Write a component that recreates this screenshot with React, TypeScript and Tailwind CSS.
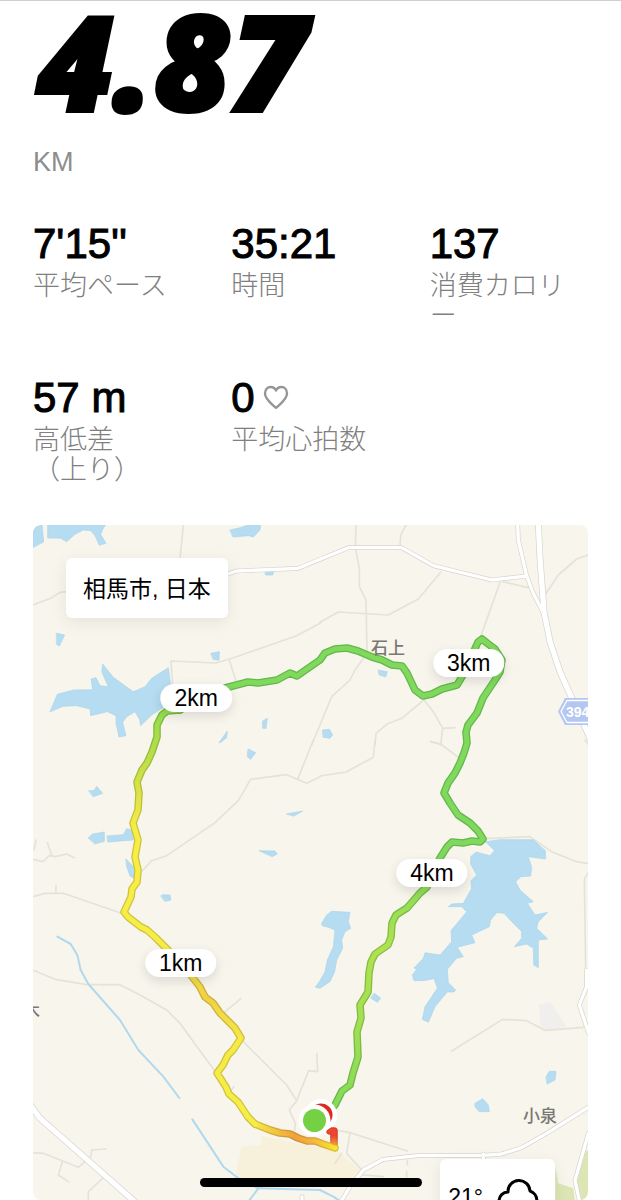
type Tile = {
  x: number;
  y: number;
  land?: { d: string; fill: string }[];
  water?: string[];
  streams?: string[];
  minor?: string[];
  major?: string[];
  highway?: string[];
};

// Map geometry, split into tiles. Tile units are a third of a map unit.
const tiles: Tile[] = [
  {
    x: 20,
    y: 515,
    water: [
      "M38 97V45L48 35L66 30L71 80Z",
      "M83 68V28H258L250 40L242 58L258 85L238 91L225 62L212 47L190 45L165 58L140 80L122 70Z",
      "M630 45L660 38L690 28H722L720 45L700 66L685 62L640 66Z",
      "M735 175L740 168H762L758 180H738Z",
      "M110 355L134 360L118 393L110 388Z",
      "M573 415L598 410L597 436L580 433Z",
      "M728 618L742 610L738 640L729 640Z",
      "M597 683L622 648L620 668L605 680Z",
      "M90 590L112 538L160 525L218 524L213 492L228 488L240 512L265 515L245 470L248 447L280 487L340 530L375 515L395 490L445 458L452 510L432 550L430 577L395 600L362 632L358 612L345 590L320 605L308 622L318 662L297 666L288 625V602L262 590L212 602L210 582L170 572L130 574Z",
    ],
    minor: [
      "M38 270L92 250L120 232L145 230",
      "M490 30L480 130",
      "M458 510L453 438L587 444L630 432L830 362L900 325",
      "M627 432L648 498",
      "M900 630L875 690",
    ],
    major: ["M620 178L650 168L835 160L900 133"],
  },
  {
    x: 320,
    y: 515,
    water: ["M175 465L202 470L197 486L178 480Z", "M8 645L28 643L38 660L30 670L10 667Z"],
    minor: [
      "M108 30L106 98L118 160V215L138 255L141 410",
      "M258 30L242 60L240 95",
      "M0 322L55 291L205 300L295 252L362 172",
      "M540 202L482 365",
      "M548 200L625 218",
      "M805 120L770 132L715 180L675 240",
      "M130 430L105 465L90 495L35 545L0 630",
      "M308 558L245 610L200 628L168 655L165 690",
      "M308 550L340 590L368 640L362 690",
      "M368 640L405 638",
      "M332 680L362 688",
    ],
    major: ["M0 133L85 98H245L340 152L515 195L620 183", "M593 25L595 75L620 183L640 235L668 290"],
    highway: ["M655 25L660 130L672 290L690 380L720 470L760 560L815 680"],
  },
  {
    x: 20,
    y: 740,
    water: [
      "M207 152L222 152L230 139L248 160L220 170Z",
      "M685 27L707 38L692 58L682 50Z",
      "M800 222L848 213L822 228Z",
      "M718 332L765 333L772 342L757 350Z",
      "M205 293L218 282L253 276V304L225 312Z",
      "M262 288L310 284L320 266L335 270L340 300L264 306Z",
      "M318 357L340 380L342 415L330 408L320 380Z",
      "M423 467L430 464L450 465L453 480L435 484Z",
    ],
    streams: ["M112 590L152 612L172 645L182 690"],
    minor: [
      "M360 400L395 362L440 347L585 248L655 182L692 118L800 104L860 130L900 110",
      "M833 118L880 0",
      "M38 470L75 460H130L300 518",
      "M108 460V437",
      "M38 358L68 365L88 347L105 350L140 342L163 353",
      "M48 300L42 330",
      "M82 308L95 345",
    ],
  },
  {
    x: 320,
    y: 740,
    water: [
      "M497 305L540 299H640L676 332L677 357L625 350L635 382L632 408L603 410L587 425L600 450L640 485L622 490L645 525L683 517L655 545L650 565L683 597L655 600V683L641 675L640 625L620 612L583 620L605 595V575L580 550L552 520L530 518L512 540L508 560L455 585L465 608L412 622L430 650L410 655L382 688L385 728L407 750L402 756L382 756L345 800L325 847L307 838L315 800L352 745L342 716L310 722L282 722L277 705L290 688L282 684L310 655L315 638L360 645L395 605L393 572L440 515L425 500H385L395 492L430 490L455 445L453 422L470 405L452 372V350L468 336L510 347L523 332Z",
      "M5 550L20 525L35 514L90 517L85 545L92 565L75 575L65 600L68 625L50 660L44 695L30 725L0 745L-14 742L0 722L15 695L22 660L40 620L45 570L25 562L8 558Z",
    ],
    minor: [
      "M0 108L78 96L160 52L165 0",
      "M332 5L362 12L415 52",
      "M495 296L630 290L695 335L770 365L805 371",
      "M805 397L793 418L797 690",
      "M795 0L806 15",
    ],
  },
  {
    x: 20,
    y: 970,
    land: [{ d: "M665 530L722 526L725 498L905 535V632H655L648 610Z", fill: "#f7f0da" }],
    streams: [
      "M182 0L205 42L300 150L355 240L430 320L478 384",
      "M517 448L610 590L655 625L715 655L900 660",
      "M715 655L685 695",
    ],
    minor: [
      "M38 0L105 28L200 44H300L360 75L440 120L480 160L560 270L590 310",
      "M612 128L662 86",
      "M670 215L730 275L800 345L830 392",
      "M890 250L893 305L866 302L830 392L808 420L826 460L824 480",
      "M632 362L642 350",
      "M38 548L70 550L175 592L212 560L215 540L258 537",
      "M127 575L115 615L145 635",
      "M248 625L205 665V695",
    ],
    major: ["M846 700V680"],
    highway: ["M20 390L60 445L350 700"],
  },
  {
    x: 320,
    y: 970,
    land: [
      { d: "M-5 515L55 545L130 610L95 655L-5 632Z", fill: "#f7f0da" },
      { d: "M657 105L690 95L740 170L678 180L660 165Z", fill: "#f0efed" },
      { d: "M806 540L790 545L765 632L775 695H806Z", fill: "#dce6b4" },
      { d: "M706 590L715 640L760 655L765 695H706Z", fill: "#dce6b4" },
    ],
    water: [
      "M163 70L182 85L172 97L153 85Z",
      "M678 320L688 304H708L705 330L682 342Z",
      "M465 400L488 386L505 405L508 425H478L466 412Z",
    ],
    streams: ["M0 660L40 680L70 700"],
    minor: [
      "M395 243L548 148L620 152L675 181L790 172",
      "M48 480L90 488L262 543",
      "M90 488L80 550L130 605",
      "M65 550L45 580",
      "M262 570V585",
      "M260 605V620",
      "M130 615L190 620",
    ],
    major: [
      "M60 700L90 650L130 600L190 568L300 556H490L545 552L605 533L680 490L810 409",
      "M490 552V575",
      "M805 490L765 632L780 700",
      "M800 0V50L778 105L806 190",
    ],
  },
];

const place = (t: Tile) => `translate(${t.x} ${t.y}) scale(${1 / 3})`;

const route = [
  {
    d: "M330 1131L334 1131L334 1146",
    outer: "url(#finish-edge)",
    inner: "url(#finish-core)",
  },
  {
    d: "M335 1148L323 1144L315 1141L307 1141L298 1138L290 1134L280 1133L270 1130L255 1124",
    outer: "url(#south-edge)",
    inner: "url(#south-core)",
  },
  {
    d: "M255 1124L248 1117L238 1102L229 1094L226 1087L217 1073L223 1065L228 1055L233 1050L241 1038L235 1028L227 1020L220 1013L213 1003L205 997L200 987L193 978L181 963L165 947L155 937L147 930L141 927L128 917L124 912L131 897L132 889L137 882L138 870L135 857L138 840L133 823L138 810L139 793L137 782L142 770L147 763L152 752L157 737L157 725L162 715L167 711L180 710",
    outer: "url(#west-edge)",
    inner: "url(#west-core)",
  },
  {
    d: "M180 710L210 694L225 688L248 682L258 683L277 680L290 673L297 676L307 669L320 660L325 653L335 649L347 648L358 651L372 657L382 660L392 665L402 666L407 673L415 690L423 696L432 694L442 689L457 685L463 675L478 642L482 639L487 643L495 649L502 660L500 672L495 680L483 698L477 713L468 725L466 732L467 743L464 753L460 763L455 773L448 783L444 793L450 803L458 815L470 823L478 831L483 839L480 842L472 841L463 843L452 842L447 847L440 858L427 887L420 893L407 908L396 915L392 923L391 937L388 945L375 954L371 962L369 973L368 992L360 1005L361 1018L357 1032L358 1057L353 1073L350 1085L342 1091L335 1105L326 1115",
    outer: "url(#east-edge)",
    inner: "url(#east-core)",
  },
];

function RouteColours() {
  return (
    <defs>
      <linearGradient id="finish-edge" gradientUnits="userSpaceOnUse" x1="0" y1="1128" x2="0" y2="1148">
        <stop offset="0.4" stopColor="#d6402c" />
        <stop offset="1" stopColor="#d8a32e" />
      </linearGradient>
      <linearGradient id="finish-core" gradientUnits="userSpaceOnUse" x1="0" y1="1128" x2="0" y2="1148">
        <stop offset="0.4" stopColor="#ec4630" />
        <stop offset="1" stopColor="#f7bd35" />
      </linearGradient>
      <linearGradient id="south-edge" gradientUnits="userSpaceOnUse" x1="255" y1="0" x2="335" y2="0">
        <stop offset="0" stopColor="#d2c53c" />
        <stop offset="0.5" stopColor="#d08b35" />
        <stop offset="0.7" stopColor="#d39a36" />
        <stop offset="1" stopColor="#d6c137" />
      </linearGradient>
      <linearGradient id="south-core" gradientUnits="userSpaceOnUse" x1="255" y1="0" x2="335" y2="0">
        <stop offset="0" stopColor="#f6ea43" />
        <stop offset="0.5" stopColor="#f0a13b" />
        <stop offset="0.7" stopColor="#f4b43c" />
        <stop offset="1" stopColor="#f9e32f" />
      </linearGradient>
      <linearGradient id="west-edge" gradientUnits="userSpaceOnUse" x1="0" y1="706" x2="0" y2="1124">
        <stop offset="0" stopColor="#6fb83e" />
        <stop offset="0.1" stopColor="#90bb3c" />
        <stop offset="0.2" stopColor="#b5bc3b" />
        <stop offset="0.3" stopColor="#cfc240" />
        <stop offset="0.6" stopColor="#cfc240" />
        <stop offset="0.7" stopColor="#ccab3c" />
        <stop offset="0.8" stopColor="#cfc240" />
        <stop offset="1" stopColor="#cfc240" />
      </linearGradient>
      <linearGradient id="west-core" gradientUnits="userSpaceOnUse" x1="0" y1="706" x2="0" y2="1124">
        <stop offset="0" stopColor="#8fdc52" />
        <stop offset="0.1" stopColor="#b2dd4a" />
        <stop offset="0.2" stopColor="#d9e344" />
        <stop offset="0.3" stopColor="#f6ee45" />
        <stop offset="0.6" stopColor="#f6ee45" />
        <stop offset="0.7" stopColor="#f0d144" />
        <stop offset="0.8" stopColor="#f6ea45" />
        <stop offset="1" stopColor="#f6ee45" />
      </linearGradient>
      <linearGradient id="east-edge" gradientUnits="userSpaceOnUse" x1="0" y1="860" x2="0" y2="1110">
        <stop offset="0" stopColor="#62b84b" />
        <stop offset="0.35" stopColor="#8ebb43" />
        <stop offset="0.65" stopColor="#83b945" />
        <stop offset="1" stopColor="#65b84a" />
      </linearGradient>
      <linearGradient id="east-core" gradientUnits="userSpaceOnUse" x1="0" y1="860" x2="0" y2="1110">
        <stop offset="0" stopColor="#80d95d" />
        <stop offset="0.35" stopColor="#aee34f" />
        <stop offset="0.65" stopColor="#a2e052" />
        <stop offset="1" stopColor="#84da5b" />
      </linearGradient>
    </defs>
  );
}

function MapDrawing() {
  return (
    <svg
      viewBox="33 525 555 675"
      className="block h-full w-full"
      fill="none"
      strokeLinecap="round"
      strokeLinejoin="round"
      aria-hidden="true"
    >
      <RouteColours />
      {tiles.map((t, i) => (
        <g key={i} transform={place(t)}>
          {t.land?.map((l) => <path key={l.d} d={l.d} fill={l.fill} />)}
          {t.minor?.map((d) => <path key={d} d={d} stroke="#e5e2da" strokeWidth="5" />)}
          {t.streams?.map((d) => <path key={d} d={d} stroke="#b0d9ee" strokeWidth="6" />)}
        </g>
      ))}
      {tiles.map((t, i) => (
        <g key={i} transform={place(t)}>
          {t.water?.map((d) => <path key={d} d={d} fill="#b5dcf0" stroke="#abd4ea" strokeWidth="2" />)}
        </g>
      ))}
      {tiles.map((t, i) => (
        <g key={i} transform={place(t)} stroke="#d6d3ce">
          {t.major?.map((d) => <path key={d} d={d} strokeWidth="14" />)}
          {t.highway?.map((d) => <path key={d} d={d} strokeWidth="20" />)}
        </g>
      ))}
      {tiles.map((t, i) => (
        <g key={i} transform={place(t)} stroke="#ffffff">
          {t.major?.map((d) => <path key={d} d={d} strokeWidth="10" />)}
          {t.highway?.map((d) => <path key={d} d={d} strokeWidth="16" />)}
        </g>
      ))}

      <path d="M565 698H592V725H565L558 711.5Z" fill="#b4c7f2" />
      <path d="M592 700.5H567L561 711.5L567 722.5H592" stroke="#ffffff" strokeWidth="1.3" />
      <text x="566" y="717" className="fill-white font-['Liberation_Sans',sans-serif] text-[14px] font-bold">
        394
      </text>

      {route.map((s) => (
        <path key={s.d} d={s.d} stroke={s.outer} strokeWidth="7.6" />
      ))}
      {route.map((s) => (
        <path key={s.d} d={s.d} stroke={s.inner} strokeWidth="5" />
      ))}

      <g className="fill-[#7a7872] font-['Noto_Sans_CJK_JP',sans-serif] text-[17px] font-medium">
        <text x="371" y="654">石上</text>
        <text x="523" y="1122">小泉</text>
        <text x="23" y="1017">木</text>
      </g>

      <circle cx="321" cy="1115" r="16" fill="#ffffff" />
      <circle cx="321" cy="1115" r="11.5" fill="#dc2a22" />
      <circle cx="314.5" cy="1120.5" r="16" fill="#ffffff" />
      <circle cx="314.5" cy="1120.5" r="11.5" fill="#76d043" />
    </svg>
  );
}

const stats = [
  { value: "7'15''", label: ["平均ペース"] },
  { value: "35:21", label: ["時間"] },
  { value: "137", label: ["消費カロリー"] },
  { value: "57 m", label: ["高低差", "（上り）"] },
  { value: "0", label: ["平均心拍数"], heart: true },
];

const markers = [
  { text: "1km", left: "26.6%", top: "64.9%" },
  { text: "2km", left: "29.4%", top: "25.6%" },
  { text: "3km", left: "78.5%", top: "20.4%" },
  { text: "4km", left: "71.9%", top: "51.6%" },
];

function Heart() {
  return (
    <svg viewBox="0 0 26 26" className="size-[26px]" fill="none" stroke="#969696" strokeWidth="2.4" aria-hidden="true">
      <path
        d="M13 23C9 19 2 14.500 2 8.500C2 4.700 4.500 2 7.600 2C10 2 12 3.300 13 5.600C14 3.300 16 2 18.400 2C21.500 2 24 4.700 24 8.500C24 14.500 17 19 13 23Z"
        strokeLinejoin="round"
      />
    </svg>
  );
}

export default function App() {
  return (
    <main
      lang="ja"
      className="min-h-screen border-t border-[#cfcfcf] bg-white px-[33px] font-['Liberation_Sans','Noto_Sans_CJK_JP',sans-serif] text-black"
    >
      <h1>
        <span className="block pl-1 font-['Open_Sans',sans-serif] text-[132px] leading-[118px] font-extrabold italic [-webkit-text-stroke:4px_black]">
          4.87
        </span>
        <span className="mt-[28px] block text-[27px] leading-[30px] font-normal text-[#8d8d8d]">KM</span>
      </h1>

      <dl className="mt-[42px] grid grid-cols-3 gap-x-[40px] gap-y-[42px]">
        {stats.map((s) => (
          <div key={s.value} className="flex flex-col">
            <dt className="order-2 mt-[2px] text-[27px] leading-[30px] font-light [line-break:loose] text-[#808080]">
              {s.label.map((line) => (
                <span key={line} className="block">
                  {line}
                </span>
              ))}
            </dt>
            <dd className="flex items-center gap-2 text-[42px] leading-[50px] [-webkit-text-stroke:1px_black]">
              {s.value}
              {s.heart && <Heart />}
            </dd>
          </div>
        ))}
      </dl>

      <section
        aria-label="ルート"
        className="relative mt-[40px] aspect-[555/675] overflow-hidden rounded-lg bg-[#f8f5ed]"
      >
        <MapDrawing />
        <div className="absolute top-[33px] left-[33px] rounded-md bg-white px-[17px] pt-[16px] pb-[14px] text-[23px] leading-[30px] shadow-[0_4px_16px_rgba(0,0,0,0.08)]">
          相馬市, 日本
        </div>
        {markers.map((m) => (
          <div
            key={m.text}
            style={{ left: m.left, top: m.top }}
            className="absolute -translate-x-1/2 -translate-y-1/2 rounded-full bg-white px-[14px] text-[23px] leading-[28px] shadow-[0_4px_12px_rgba(0,0,0,0.12)]"
          >
            {m.text}
          </div>
        ))}
        <div className="absolute top-[634px] right-[33px] flex h-[60px] items-start gap-[14px] rounded-md bg-white pt-[20px] pr-[14px] pl-[8px] shadow-[0_4px_16px_rgba(0,0,0,0.08)]">
          <span className="mt-[4px] text-[23px] leading-[28px]">21°</span>
          <svg viewBox="0 0 44 36" className="h-[36px] w-[44px]" fill="none" stroke="#000000" strokeWidth="3" strokeLinejoin="round" aria-label="曇り">
            <path d="M11 31A9 9 0 0 1 11 13A11 11 0 0 1 33 12A10 10 0 0 1 33 31Z" />
          </svg>
        </div>
      </section>

      <div className="fixed bottom-[13px] left-1/2 h-[9px] w-[222px] -translate-x-1/2 rounded-full bg-black" />
    </main>
  );
}
